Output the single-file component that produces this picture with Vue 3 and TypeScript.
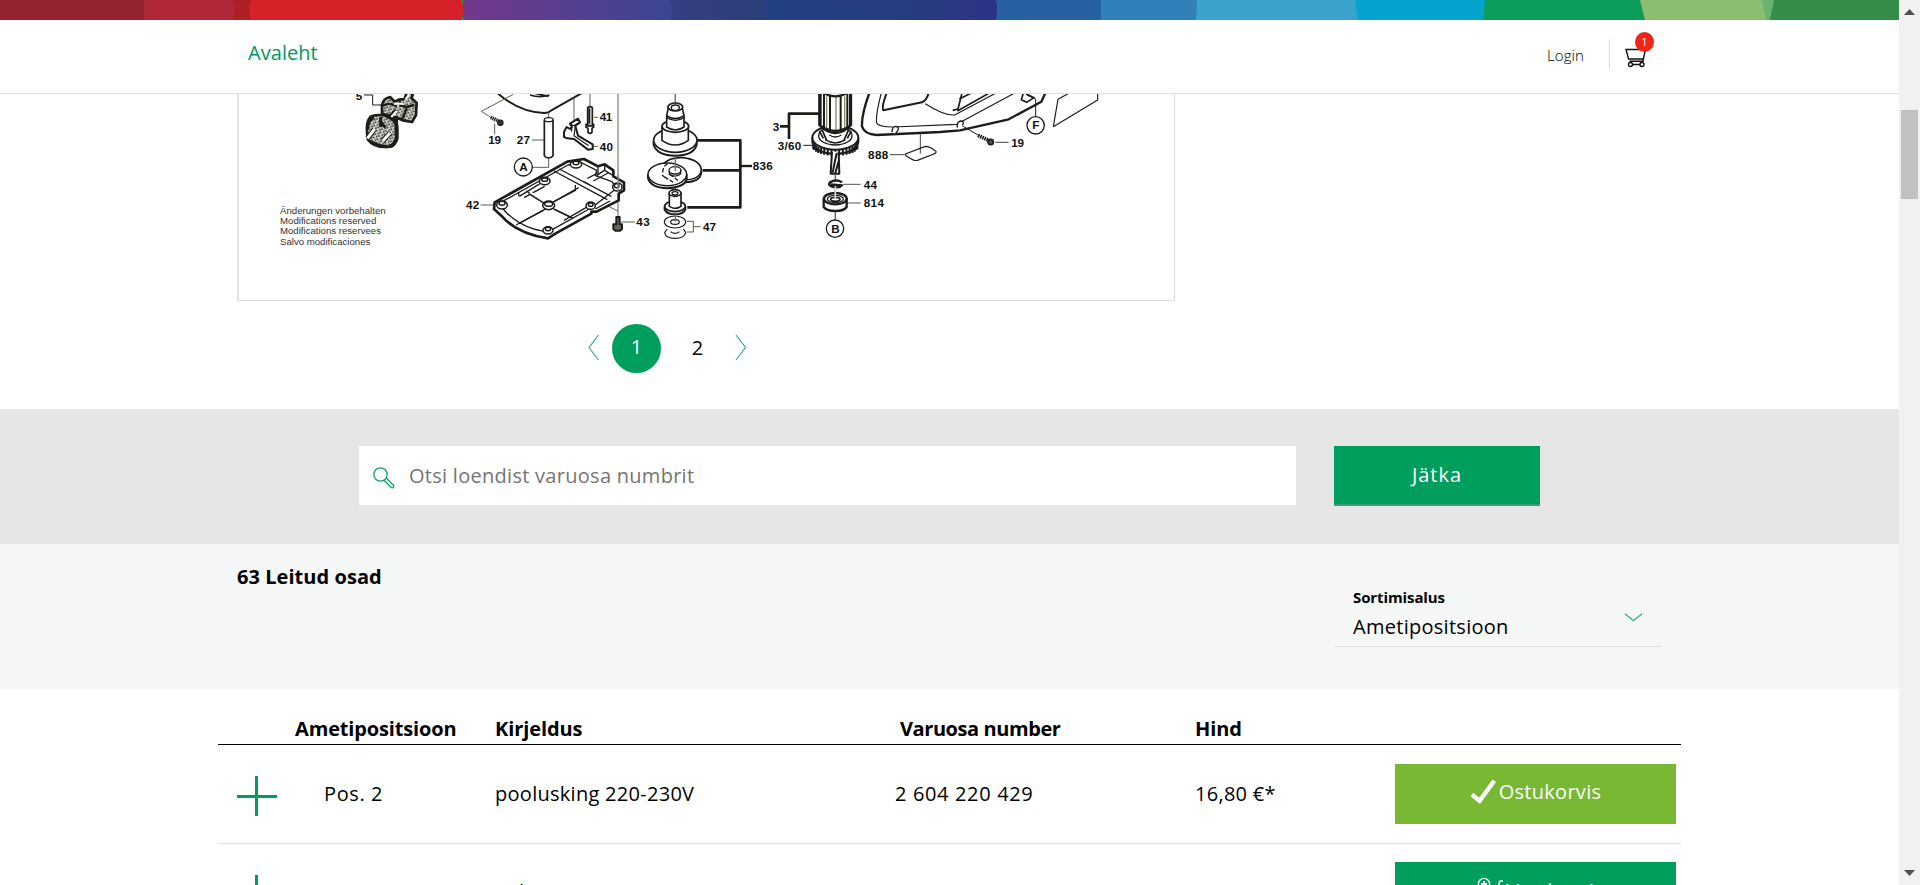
<script setup lang="ts">
interface Part {
  pos: string
  name: string
  number: string
  price: string
  inCart: boolean
}

const parts: Part[] = [
  { pos: 'Pos. 2', name: 'poolusking 220-230V', number: '2 604 220 429', price: '16,80 €*', inCart: true },
  { pos: 'Pos. 3', name: 'ankur 220-230V', number: '2 604 010 657', price: '44,30 €', inCart: false },
]

interface Label {
  t: string
  x: number
  y: number
  w: number
}

const labelsMid: Label[] = [
  { t: '41', x: 449, y: 109, w: 38 },
  { t: '40', x: 449, y: 197, w: 40 },
  { t: '19', x: 115, y: 178, w: 38 },
  { t: '27', x: 200, y: 177, w: 40 },
  { t: '42', x: 48, y: 373, w: 40 },
  { t: '43', x: 559, y: 424, w: 40 },
]
const labelsGear: Label[] = [
  { t: '836', x: 398, y: 256, w: 60 },
  { t: '47', x: 249, y: 438, w: 39 },
  { t: '3', x: 458, y: 139, w: 19 },
  { t: '3/60', x: 473, y: 194, w: 71 },
]
const labelsHouse: Label[] = [
  { t: '888', x: 264, y: 223, w: 61 },
  { t: '19', x: 694, y: 185, w: 38 },
  { t: '44', x: 251, y: 311, w: 40 },
  { t: '814', x: 251, y: 366, w: 61 },
]
const notes: Label[] = [
  { t: 'Änderungen vorbehalten', x: 150, y: 387, w: 317 },
  { t: 'Modifications reserved', x: 150, y: 418, w: 289 },
  { t: 'Modifications reservees', x: 150, y: 448, w: 303 },
  { t: 'Salvo modificaciones', x: 150, y: 479, w: 271 },
]

const teeth = Array.from({ length: 17 }, (_, i) => {
  const a = Math.PI * (0.06 + (i * 0.88) / 16)
  const x = 166 + 67 * Math.cos(a)
  const y = 168 + 26 * Math.sin(a)
  return `M${x.toFixed(1)} ${y.toFixed(1)}v18`
}).join('')
</script>

<template>
  <div class="page">
    <div class="content">
      <header class="header">
        <svg class="supergraphic" width="1899" height="20" viewBox="0 0 1899 20">
          <defs>
            <linearGradient id="violet" x1="0" x2="1" y1="0" y2="0">
              <stop offset="0" stop-color="#73388b" />
              <stop offset="1" stop-color="#3a4595" />
            </linearGradient>
            <linearGradient id="navy" x1="0" x2="1" y1="0" y2="0">
              <stop offset="0" stop-color="#393d84" />
              <stop offset="1" stop-color="#2a3f78" />
            </linearGradient>
            <linearGradient id="blue" x1="0" x2="1" y1="0" y2="0">
              <stop offset="0" stop-color="#214084" />
              <stop offset="0.6" stop-color="#273c80" />
              <stop offset="1" stop-color="#2d3386" />
            </linearGradient>
          </defs>
          <rect width="1899" height="20" fill="#348e47" />
          <path d="M1600 0h174l-4 20h-160z" fill="#67b370" />
          <path d="M1600 0h162l4 20h-166z" fill="#8bbe70" />
          <path d="M1400 0h240l5 20h-240z" fill="#0c9d5a" />
          <path d="M1300 0h185l-2 20h-183z" fill="#04a4cf" />
          <path d="M1100 0h255l3 20h-258z" fill="#3aa2cc" />
          <path d="M1000 0h197l-1 20h-196z" fill="#3080ba" />
          <path d="M900 0h201v20H900z" fill="#2560a3" />
          <path d="M766 0h230q2 8 0 20H766z" fill="url(#blue)" />
          <path d="M660 0h106v20H660z" fill="url(#navy)" />
          <path d="M463 0h206q6 10 1 20H463z" fill="url(#violet)" />
          <path d="M236 0h225q5 10 0 20H236z" fill="#d52127" />
          <path d="M144 0h107q-3 10 0 20H144z" fill="#af2025" />
          <path d="M144 0h88q6 10 0 20h-88z" fill="#b1273a" />
          <path d="M0 0h144v20H0z" fill="#942331" />
        </svg>
        <div class="bar">
          <a class="home">Avaleht</a>
          <div class="tools">
            <a class="login">Login</a>
            <div class="cart">
              <svg width="23" height="20" viewBox="0 0 23 20" fill="none" stroke="#111" stroke-width="1.400">
                <path d="M22 1.200H20.500L18 13.200H4.500M20 1.500H1L3.600 11H18.300M6 16.500H17" />
                <circle cx="5.500" cy="16.500" r="2" fill="#fff" />
                <circle cx="17" cy="16.500" r="2" fill="#fff" />
              </svg>
              <span class="badge">1</span>
            </div>
          </div>
        </div>
      </header>

      <section class="viewer">
        <div class="drawing">
          <svg width="935" height="206" viewBox="239 94 935 206" fill="none" stroke="#1c1c18" stroke-linejoin="round">
            <defs>
              <pattern id="speckle" width="13" height="11" patternUnits="userSpaceOnUse" patternTransform="rotate(24)">
                <rect width="13" height="11" fill="#e6e5dc" />
                <path d="M1 2h4M8 6h4" stroke="#26261f" stroke-width="4" />
              </pattern>
            </defs>
            <!-- power plug -->
            <g transform="translate(230 85) scale(.33333)" stroke-width="3">
              <path d="M402 30H428V60H455" />
              <path d="M456 94V60Q460 40 480 36L494 50L506 44L524 42L530 22H550L545 40L560 54L558 90L546 111L518 106L500 98Z" fill="url(#speckle)" stroke-width="8" />
              <path d="M500 98V160Q490 188 466 186Q430 186 414 164Q404 108 424 94Q448 86 472 94Z" fill="url(#speckle)" stroke-width="8" />
              <path d="M470 94Q500 100 500 130V160Q494 180 480 184" stroke-width="12" />
              <path d="M458 62Q480 50 500 64M456 86L480 92L498 74M508 46L512 62L530 66L552 60M516 104L530 70" stroke-width="7" />
              <path d="M484 96L500 78M492 56H520M526 44L538 28" stroke="#fff" stroke-width="6" />
              <path d="M414 134Q412 106 432 98M452 96V126M452 110L466 128M420 168Q444 184 470 184" stroke-width="9" />
              <path d="M412 160L434 132M458 168L480 144" stroke-width="15" />
              <path d="M412 160L434 132M458 168L480 144" stroke="#fff" stroke-width="9" />
              <g class="callout" stroke="none"><text x="377" y="45" textLength="19">5</text></g>
              <g class="note" stroke="none">
                <text v-for="n in notes" :key="n.t" :x="n.x" :y="n.y" :textLength="n.w">{{ n.t }}</text>
              </g>
            </g>

            <!-- base plate and levers -->
            <g transform="translate(450 85) scale(.33333)" stroke-width="3.500">
              <path d="M142 24Q208 82 282 84Q296 84 304 76L396 24" stroke-width="6" />
              <path d="M240 30Q270 40 298 30M250 24L296 34" stroke-width="5" />
              <path d="M190 28L94 79L122 97M372 38V108M420 24V66M296 84V100M134 116V148M246 165H282M432 97H444M426 184H444M246 247H296V222M92 360H132M514 411H554M472 362L503 378M676 24V60" stroke="#5d5d52" stroke-width="3" />
              <path d="M504 24V398" stroke="#8a8a80" stroke-width="4" />
              <path d="M122 97L146 108" stroke-width="11" stroke-dasharray="4 2" />
              <circle cx="151" cy="113" r="8" fill="#333" />
              <path d="M283 104V213Q296 225 309 213V104" fill="#fff" stroke-width="5" />
              <ellipse cx="296" cy="104" rx="13" ry="6" fill="#fff" stroke-width="4" />
              <path d="M413 68V118H408V126L414 130V142Q420 148 426 142V130L431 126V118H427V68Q420 62 413 68Z" fill="#fff" stroke-width="5" />
              <path d="M409 122H431M418 70V116" stroke-width="6" />
              <path d="M342 140L350 126L360 132L366 126L360 116L384 101L390 112L376 122L384 152L428 178V192L414 194L372 162L352 160L342 156Z" fill="#fff" stroke-width="6" />
              <path d="M360 116L372 122L390 112M366 130L364 140M376 124L372 152L416 182" />
              <circle cx="220" cy="246" r="27" fill="#fff" stroke-width="4" />
              <path d="M134 352L352 230L402 222L444 244L464 238L490 256V274L522 292V316L506 326V346L440 380H424V386L316 446L294 460Q200 446 154 392L132 372Z" fill="#fff" stroke-width="8" />
              <path d="M146 356L354 240L396 234L440 256L436 272L486 290L500 310L428 366L296 440Q226 436 170 384Z" stroke-width="4" />
              <path d="M312 258L472 344M328 252L484 334M228 318L296 356M208 334L270 296M222 338L284 304M304 354L386 308M300 366L370 400M290 370L198 420M342 406L418 362M436 372L480 348M444 244V264L412 280M464 238V256L490 272M440 272L466 254M430 288L474 264" stroke-width="4" />
              <path d="M240 322L290 352M308 362L380 320" stroke-width="7" stroke="#fff" />
              <path d="M236 326L284 356M312 350L376 316M314 374L364 398M280 376L206 416M206 322V334M376 300V318M400 290L420 300" stroke-width="4" />
              <g fill="#fff" stroke-width="4.500">
                <ellipse cx="378" cy="238" rx="17" ry="11" /><ellipse cx="378" cy="234" rx="9" ry="5" />
                <ellipse cx="284" cy="288" rx="16" ry="11" /><ellipse cx="284" cy="284" rx="9" ry="5" />
                <ellipse cx="156" cy="360" rx="16" ry="12" /><ellipse cx="156" cy="355" rx="9" ry="6" />
                <ellipse cx="296" cy="361" rx="18" ry="13" /><ellipse cx="296" cy="357" rx="12" ry="7" />
                <ellipse cx="294" cy="436" rx="15" ry="11" /><ellipse cx="294" cy="432" rx="8" ry="5" />
                <ellipse cx="422" cy="362" rx="14" ry="11" /><ellipse cx="422" cy="359" rx="7" ry="5" />
                <ellipse cx="502" cy="306" rx="14" ry="12" /><ellipse cx="500" cy="302" rx="7" ry="6" />
              </g>
              <path d="M504 270V320" stroke="#8a8a80" stroke-width="4" />
              <path d="M499 396H509V418H516V432L510 437H496L490 432V418H499Z" fill="#66665e" stroke-width="6" />
              <g class="callout" stroke="none">
                <text v-for="n in labelsMid" :key="n.t" :x="n.x" :y="n.y" :textLength="n.w">{{ n.t }}</text>
                <text x="208" y="258" textLength="24">A</text>
              </g>
            </g>

            <!-- gear shaft, eccentric and armature -->
            <g transform="translate(620 85) scale(.33333)" stroke-width="4">
              <path d="M166 24V60M166 210V248M166 304V326M166 386V408" stroke="#77776c" stroke-width="4" />
              <path d="M101 166V180Q112 212 166 212Q220 212 230 180V166" fill="#fff" stroke-width="6" />
              <ellipse cx="166" cy="166" rx="65" ry="36" fill="#fff" stroke-width="5" />
              <path d="M126 124V166Q166 194 205 166V124" fill="#fff" stroke-width="5" />
              <ellipse cx="166" cy="124" rx="40" ry="18" fill="#fff" stroke-width="5" />
              <path d="M140 92V126Q166 144 192 126V92M140 92L146 64H186L192 92Q166 110 140 92Z" fill="#fff" stroke-width="5" />
              <ellipse cx="166" cy="66" rx="22" ry="12" fill="#fff" stroke-width="5" />
              <ellipse cx="166" cy="68" rx="12" ry="8" />
              <path d="M140 98Q166 114 192 98" />
              <path d="M130 238Q148 216 188 218Q240 224 244 254V264Q240 290 196 292" fill="#fff" stroke-width="5" />
              <path d="M244 256Q238 284 196 284" />
              <path d="M84 268V280Q92 308 142 310Q196 306 200 282V268" fill="#fff" stroke-width="6" />
              <ellipse cx="142" cy="268" rx="58" ry="34" fill="#fff" stroke-width="4.500" />
              <path d="M128 262Q130 238 148 236M134 276L160 292M150 268L176 288M126 270L140 282" stroke-width="4" stroke-dasharray="12 6" />
              <ellipse cx="165" cy="256" rx="18" ry="11" fill="#fff" /><path d="M148 258V268Q166 280 182 266V256" />
              <path d="M166 214V258" stroke="#77776c" />
              <path d="M134 364V374Q142 388 165 388Q188 388 196 374V364" fill="#fff" stroke-width="6" />
              <ellipse cx="165" cy="364" rx="31" ry="16" fill="#fff" stroke-width="5" />
              <path d="M148 324V364Q166 376 183 364V324" fill="#fff" stroke-width="5" />
              <ellipse cx="165" cy="324" rx="18" ry="10" fill="#fff" stroke-width="5" /><ellipse cx="165" cy="325" rx="9" ry="5" />
              <ellipse cx="165" cy="411" rx="32" ry="18" fill="#fff" stroke-width="3.500" /><ellipse cx="165" cy="411" rx="13" ry="7" stroke-width="3.500" />
              <path d="M142 432L134 442Q136 460 165 460Q194 460 197 442L190 432M152 440Q165 450 178 440" stroke-width="3.500" />
              <path d="M166 386V410" stroke="#77776c" />
              <path d="M232 166H361V367H202M248 256H361" stroke-width="8" />
              <path d="M361 243H396" stroke-width="7" />
              <path d="M200 409H220V441H200M220 425H242" stroke="#55554c" stroke-width="3" />
              <path d="M600 86H507V162M507 124H480" stroke-width="8" />
              <path d="M550 181H576" stroke-width="3" />
              <g class="callout" stroke="none">
                <text v-for="n in labelsGear" :key="n.t" :x="n.x" :y="n.y" :textLength="n.w">{{ n.t }}</text>
              </g>
            </g>

            <!-- armature end, bearing and housing -->
            <g transform="translate(780 85) scale(.33333)" stroke-width="4">
              <path :d="teeth" stroke-width="6" />
              <path d="M97 158V172Q110 206 166 206Q222 206 235 172V158" fill="#fff" stroke-width="6" />
              <path :d="teeth" stroke-width="6" />
              <ellipse cx="166" cy="158" rx="69" ry="36" fill="#fff" stroke-width="6" />
              <ellipse cx="166" cy="152" rx="50" ry="28" fill="#fff" stroke-width="4" />
              <path d="M118 138L130 160M214 138L202 160M126 134L140 166M206 134L192 166" stroke-width="5" />
              <path d="M118 20V120Q140 144 166 144Q192 144 213 120V20Z" fill="#fff" stroke-width="7" />
              <path d="M122 20V122M132 20V128M150 34V134M182 34V134M202 20V128M210 20V122" stroke-width="6" />
              <path d="M140 34V132M194 34V132M168 34V138" stroke="#8f8d68" stroke-width="4" />
              <path d="M130 24Q166 44 202 24M124 124Q166 152 208 124" stroke-width="7" />
              <path d="M148 150Q166 162 184 150M136 164Q166 184 196 164" />
              <path d="M156 200L152 266H178L176 200M170 204L158 262M176 228L166 264" fill="#fff" stroke-width="6" />
              <path d="M166 266V290M166 304V344M166 380V404" stroke="#66665b" stroke-width="4" />
              <path d="M186 292Q168 280 150 292Q140 304 170 307Q182 306 188 299M152 298L186 301" stroke-width="7" />
              <path d="M188 298H242M202 354H242" stroke="#55554c" stroke-width="3" />
              <path d="M131 340V366Q140 378 166 378Q192 378 200 366V340" fill="#fff" stroke-width="7" />
              <ellipse cx="166" cy="341" rx="34" ry="17" fill="#fff" stroke-width="7" />
              <ellipse cx="166" cy="342" rx="24" ry="11" /><ellipse cx="166" cy="343" rx="14" ry="6" stroke-width="5" />
              <path d="M166 304V340" stroke="#ddd" stroke-width="5" />
              <circle cx="165" cy="431" r="26" fill="#fff" stroke-width="4" />

              <path d="M268 24Q244 90 246 124Q252 148 290 150L480 141L540 136L686 103L784 50L796 24" stroke-width="7" />
              <path d="M304 24Q286 92 290 114Q296 126 340 126L530 118L704 24" stroke-width="3.500" />
              <path d="M320 24Q304 66 310 76L426 52Q440 46 446 24" stroke-width="6" />
              <path d="M436 56Q492 92 524 90L648 24" stroke-width="3.500" />
              <path d="M546 24L534 72L518 76M532 78L628 24M538 42L574 24" stroke-width="5" />
              <path d="M336 142Q336 124 348 124Q358 126 354 136L346 146M532 128Q530 110 542 108Q554 108 548 120" fill="#fff" stroke-width="4" />
              <path d="M730 24L724 44L740 52L762 38L738 26" stroke-width="5" />
              <path d="M740 30L767 42V96M546 122L594 150" stroke-width="3" />
              <path d="M594 151L626 166" stroke-width="11" stroke-dasharray="5 2" />
              <circle cx="632" cy="171" r="8" fill="#55554d" stroke-width="5" />
              <path d="M646 172H686M330 209H374M421 146V206" stroke="#44443d" stroke-width="3" />
              <circle cx="767" cy="121" r="26" fill="#fff" stroke-width="4" />
              <path d="M376 207L436 184Q450 184 468 199Q470 204 460 208L412 226Q402 228 394 222L378 212Z" stroke-width="3.500" />
              <path d="M820 125L834 43L868 24M820 125L953 45V24" stroke-width="3.500" />
              <g class="callout" stroke="none">
                <text v-for="n in labelsHouse" :key="n.t" :x="n.x" :y="n.y" :textLength="n.w">{{ n.t }}</text>
                <text x="154" y="443" textLength="24">B</text>
                <text x="757" y="133" textLength="21">F</text>
              </g>
            </g>
          </svg>
        </div>
        <nav class="pager">
          <svg width="12" height="27" viewBox="0 0 12 27"><path d="M10.500 1L1 13.500L10.500 26" fill="none" stroke="#35b07d" stroke-width="1.200" /></svg>
          <span class="num current">1</span>
          <span class="num">2</span>
          <svg width="12" height="27" viewBox="0 0 12 27"><path d="M1 1L10.500 13.500L1 26" fill="none" stroke="#35b07d" stroke-width="1.200" /></svg>
        </nav>
      </section>

      <section class="search">
        <div class="field">
          <svg width="22" height="22" viewBox="0 0 22 22" fill="none" stroke="#0ca465" stroke-width="1.300">
            <circle cx="7.500" cy="7.500" r="6.700" />
            <path d="M10.800 13L18.300 20.500Q19.700 21.400 20.500 20.400Q21.300 19.500 20.400 18.300L13 10.800" />
          </svg>
          <span class="placeholder">Otsi loendist varuosa numbrit</span>
        </div>
        <button class="submit">Jätka</button>
      </section>

      <section class="results">
        <h2 class="count">63 Leitud osad</h2>
        <div class="sort">
          <div class="sort-text">
            <b class="sort-label">Sortimisalus</b>
            <span class="sort-value">Ametipositsioon</span>
          </div>
          <svg width="19" height="9" viewBox="0 0 19 9"><path d="M1 .8L9.500 7.800L18 .8" fill="none" stroke="#2fae79" stroke-width="1.200" /></svg>
        </div>
      </section>

      <section class="table">
        <div class="row head">
          <span></span>
          <span class="h-pos">Ametipositsioon</span>
          <span class="h-name">Kirjeldus</span>
          <span class="h-number">Varuosa number</span>
          <span class="h-price">Hind</span>
          <span></span>
        </div>
        <div v-for="p in parts" :key="p.pos" class="row">
          <span class="plus"></span>
          <span class="cell pos">{{ p.pos }}</span>
          <span class="cell">{{ p.name }}</span>
          <span class="cell number">{{ p.number }}</span>
          <span class="cell">{{ p.price }}</span>
          <button v-if="p.inCart" class="buy done">
            <svg width="27" height="25" viewBox="0 0 27 25"><path d="M1.800 15.500L9.600 21.800L24.300 1.800" fill="none" stroke="#fff" stroke-width="4.400" /></svg>
            <span>Ostukorvis</span>
          </button>
          <button v-else class="buy add">
            <svg width="26" height="30" viewBox="0 0 26 30" fill="none" stroke="#fff" stroke-width="1.400">
              <circle cx="7" cy="8" r="5.600" /><path d="M7 5v6M4 8h6" stroke-width="2" />
              <path d="M26 5h-2q-2 0-2 3l-2 13H7L4 14M7 24h14" />
              <circle cx="9" cy="26" r="2" /><circle cx="18" cy="26" r="2" />
            </svg>
            <span>Lisa korvi</span>
          </button>
        </div>
      </section>
    </div>

    <div class="scrollbar">
      <svg width="11" height="6" viewBox="0 0 11 6"><path d="M0 6L5.500 0L11 6z" fill="#505050" /></svg>
      <div class="thumb"></div>
      <svg class="down" width="11" height="6" viewBox="0 0 11 6"><path d="M0 0h11L5.500 6z" fill="#505050" /></svg>
    </div>
  </div>
</template>

<style>
html,
body {
  overflow: hidden;
}
</style>

<style scoped>
.page {
  display: flex;
  width: 1920px;
  height: 885px;
  overflow: hidden;
  background: #fff;
  color: #000;
  font: 400 20px/28px "Open Sans", "Noto Sans", sans-serif;
  letter-spacing: 0.28px;
}
.content {
  width: 1899px;
  height: 885px;
  overflow: hidden;
}
svg {
  display: block;
  flex: none;
}
button {
  border: 0;
  padding: 0;
  font: inherit;
  letter-spacing: inherit;
  color: #fff;
}
.header {
  height: 94px;
  box-sizing: border-box;
  border-bottom: 1px solid #e2e3e3;
}
.bar {
  display: flex;
  justify-content: space-between;
  height: 73px;
  padding: 0 246px 0 248px;
}
.home {
  margin-top: 19px;
  color: #00985b;
  letter-spacing: 0.05px;
}
.tools {
  display: flex;
  margin-top: 19px;
  height: 30px;
}
.login {
  width: 62px;
  padding-top: 2px;
  font-size: 15px;
  font-weight: 300;
  line-height: 28px;
  letter-spacing: 0.1px;
}
.cart {
  position: relative;
  width: 43px;
  border-left: 1px solid #dfe1e1;
}
.cart svg {
  margin: 9px 0 0 15px;
}
.badge {
  position: absolute;
  top: -7px;
  left: 25px;
  width: 19px;
  height: 20px;
  border-radius: 50%;
  background: #ef2516;
  color: #fff;
  font-size: 11px;
  line-height: 20px;
  text-align: center;
}
.viewer {
  height: 315px;
}
.drawing {
  width: 935px;
  height: 206px;
  margin-left: 237px;
  overflow: hidden;
  border: 1px solid #dedede;
  border-left: 2px solid #e3e3e3;
  border-top: 0;
}
.callout {
  fill: #111;
  font: bold 35px "Liberation Sans", Arial, sans-serif;
  letter-spacing: 0;
}
.note {
  fill: #333;
  font: 29px "Liberation Sans", Arial, sans-serif;
  letter-spacing: 0;
}
.pager {
  display: flex;
  align-items: center;
  height: 49px;
  margin: 23px 0 0 588px;
}
.pager svg {
  margin-bottom: 2px;
}
.num {
  width: 49px;
  height: 49px;
  line-height: 47px;
  text-align: center;
  letter-spacing: 0;
  border-radius: 50%;
}
.num.current {
  margin: 0 12px;
  background: #009e5d;
  color: #fff;
  line-height: 45px;
}
.num + svg {
  margin-left: 13px;
}
.search {
  display: flex;
  height: 98px;
  padding: 37px 0 0 359px;
  background: #e6e6e6;
}
.field {
  display: flex;
  width: 923px;
  height: 59px;
  padding-left: 14px;
  background: #fff;
}
.field svg {
  margin-top: 21px;
}
.placeholder {
  margin: 16px 0 0 14px;
  color: #757575;
}
.submit {
  width: 206px;
  height: 60px;
  margin-left: 38px;
  padding-bottom: 0;
  border-bottom: 2px solid #3d9d72;
  background: #009e5d;
  letter-spacing: 1px;
}
.results {
  display: flex;
  justify-content: space-between;
  height: 145px;
  padding: 0 237px;
  background: #f4f7f6;
}
.count {
  margin: 19px 0 0;
  font: inherit;
  font-weight: 700;
  letter-spacing: 0.05px;
}
.sort {
  display: flex;
  justify-content: space-between;
  box-sizing: border-box;
  width: 328px;
  height: 63px;
  margin-top: 40px;
  padding: 0 19px 0 19px;
  border-bottom: 1px solid #e1e4e3;
}
.sort-text {
  display: flex;
  flex-direction: column;
}
.sort-label {
  padding-top: 0;
  font-size: 15px;
  line-height: 27px;
  letter-spacing: -0.1px;
}
.sort-value {
  margin-top: 2px;
}
.sort svg {
  margin-top: 29px;
}
.table {
  width: 1463px;
  margin-left: 218px;
}
.row {
  display: grid;
  grid-template-columns: 77px 200px 399px 301px 200px 281px;
  align-items: center;
  box-sizing: border-box;
  height: 99px;
  border-bottom: 1px solid #dfdfdf;
}
.row.head {
  height: 56px;
  align-items: end;
  padding-bottom: 1px;
  border-bottom: 1px solid #000;
  font-weight: 700;
  letter-spacing: -0.1px;
}
.h-pos {
  letter-spacing: -0.15px;
}
.h-number {
  padding-left: 6px;
  letter-spacing: -0.42px;
}
.row:last-child .cell {
  padding-bottom: 2px;
}
.pos {
  padding-left: 29px;
  letter-spacing: 0.6px;
}
.number {
  padding-left: 1px;
  letter-spacing: 0.65px;
}
.plus {
  width: 40px;
  height: 40px;
  margin: 4px 0 0 19px;
  background:
    linear-gradient(#009e5d, #009e5d) 0 19px / 40px 3px no-repeat,
    linear-gradient(#009e5d, #009e5d) 18px 0 / 3px 40px no-repeat;
}
.buy {
  display: flex;
  align-items: center;
  justify-content: center;
  box-sizing: border-box;
  height: 60px;
  padding-bottom: 5px;
  background: #009e5d;
}
.buy.done {
  background: #78b833;
}
.buy.add {
  margin-top: -2px;
  padding-bottom: 2px;
}
.buy svg {
  margin-right: 2px;
}
.scrollbar {
  display: flex;
  flex-direction: column;
  align-items: center;
  box-sizing: border-box;
  width: 21px;
  height: 885px;
  padding: 9px 0;
  background: #f1f1f1;
}
.thumb {
  width: 17px;
  height: 89px;
  margin-top: 95px;
  background: #c1c1c1;
}
.down {
  margin-top: auto;
}
</style>
